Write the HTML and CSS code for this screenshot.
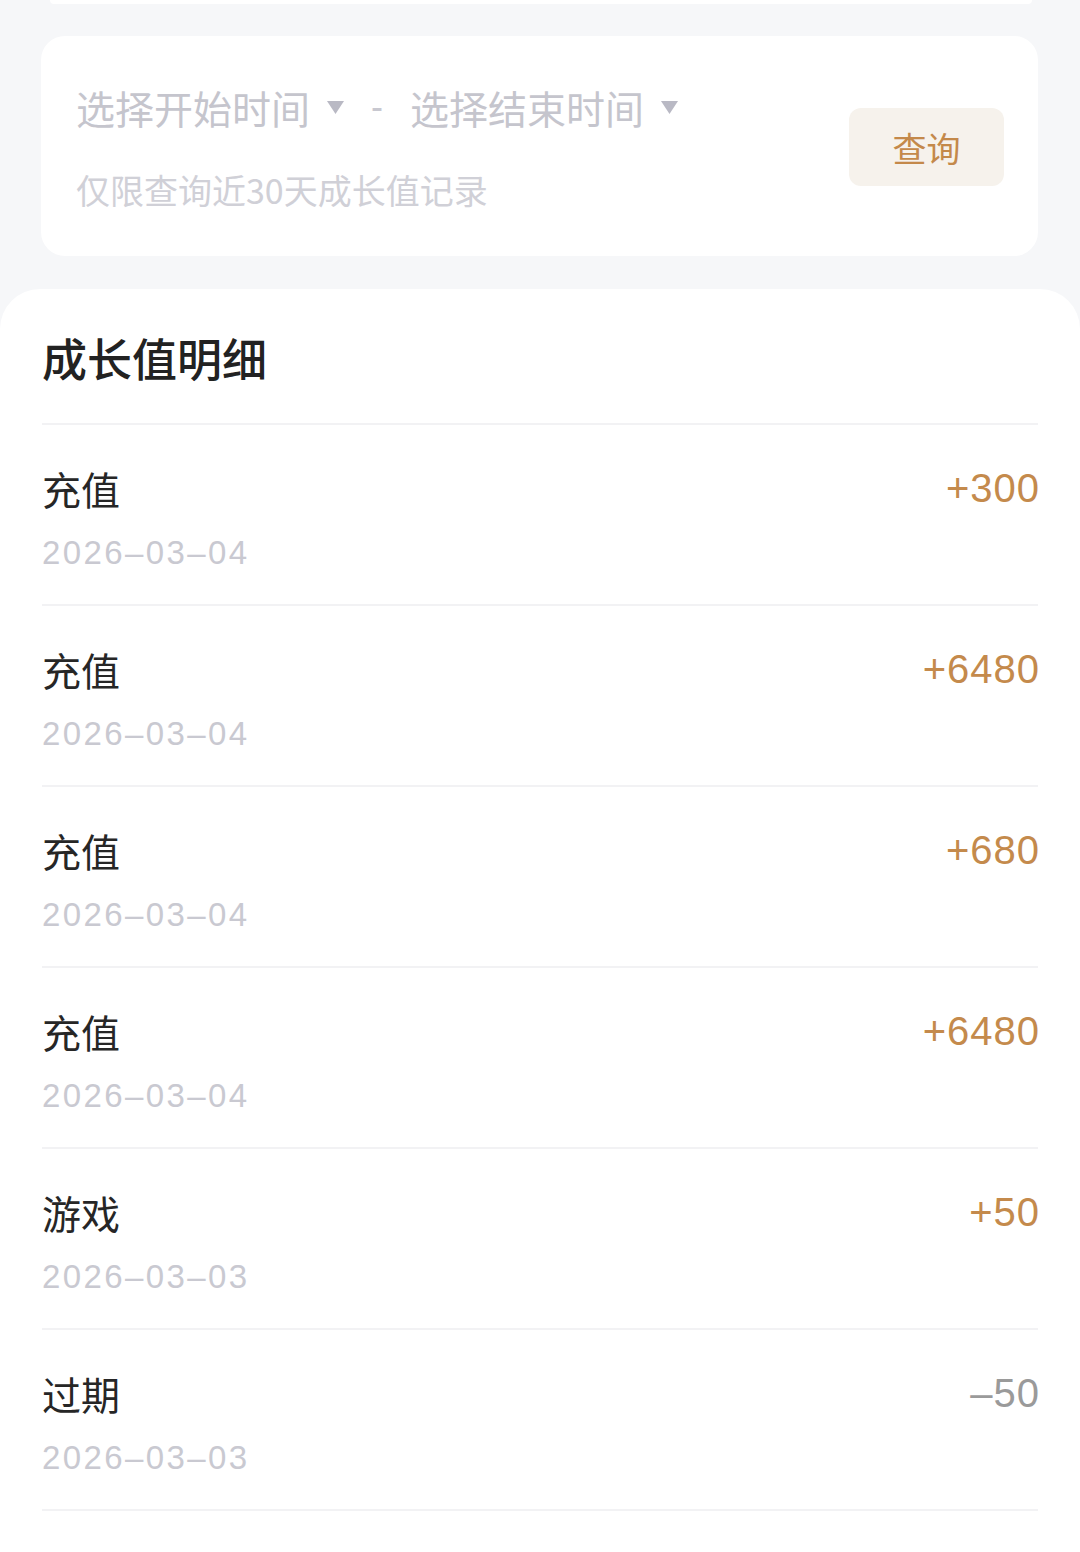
FILE: index.html
```html
<!DOCTYPE html>
<html lang="zh-CN">
<head>
    <meta charset="UTF-8">
    <meta name="viewport" content="width=device-width, initial-scale=1.0">
    <title>成长值明细</title>
    <link rel="stylesheet" href="styles.css">
</head>
<body>

<div class="page">
    <!-- bottom edge of the card above -->
    <div class="prev-card"></div>

    <!-- Date filter -->
    <div class="filter">
        <div class="filter-left">
            <div class="range">
                <span class="picker">选择开始时间
                    <svg class="arrow" width="19" height="15" viewBox="0 0 19 15"><path d="M1 1 H18 L9.5 14 Z" fill="#b9b9c4"/></svg>
                </span>
                <span class="dash">-</span>
                <span class="picker">选择结束时间
                    <svg class="arrow" width="19" height="15" viewBox="0 0 19 15"><path d="M1 1 H18 L9.5 14 Z" fill="#b9b9c4"/></svg>
                </span>
            </div>
            <p class="hint">仅限查询近30天成长值记录</p>
        </div>
        <button type="button" class="btn">查询</button>
    </div>

    <!-- Records -->
    <div class="records">
        <h2 class="records-title">成长值明细</h2>

        <div class="row">
            <div class="row-info">
                <div class="row-name">充值</div>
                <div class="row-date">2026–03–04</div>
            </div>
            <div class="row-value">+300</div>
        </div>
        <div class="row">
            <div class="row-info">
                <div class="row-name">充值</div>
                <div class="row-date">2026–03–04</div>
            </div>
            <div class="row-value">+6480</div>
        </div>
        <div class="row">
            <div class="row-info">
                <div class="row-name">充值</div>
                <div class="row-date">2026–03–04</div>
            </div>
            <div class="row-value">+680</div>
        </div>
        <div class="row">
            <div class="row-info">
                <div class="row-name">充值</div>
                <div class="row-date">2026–03–04</div>
            </div>
            <div class="row-value">+6480</div>
        </div>
        <div class="row">
            <div class="row-info">
                <div class="row-name">游戏</div>
                <div class="row-date">2026–03–03</div>
            </div>
            <div class="row-value">+50</div>
        </div>
        <div class="row">
            <div class="row-info">
                <div class="row-name">过期</div>
                <div class="row-date">2026–03–03</div>
            </div>
            <div class="row-value minus">–50</div>
        </div>
    </div>
</div>

</body>
</html>
```

FILE: styles.css
```css
body {
    margin: 0;
    background-color: #f6f7f9;
    font-family: "Liberation Sans", "Noto Sans CJK SC", sans-serif;
    color: #222;
}

.page {
    width: 1080px;
    height: 1552px;
    overflow: hidden;
}

.prev-card {
    height: 4px;
    margin: 0 48px 0 50px;
    background: #fff;
    border-radius: 0 0 4px 4px;
}

/* filter card */
.filter {
    margin: 32px 42px 0 41px;
    height: 220px;
    background: #fff;
    border-radius: 24px;
    padding: 0 34px 0 35px;
    display: flex;
    align-items: center;
    justify-content: space-between;
}

.range {
    display: flex;
    align-items: center;
    height: 56px;
}

.picker {
    display: flex;
    align-items: center;
    font-size: 39px;
    color: #c5c5cd;
    font-family: "Noto Sans CJK SC", sans-serif;
}

.arrow {
    margin-left: 16px;
}

.dash {
    font-size: 36px;
    color: #c8c8d0;
    margin: 0 27px 0 26px;
}

.hint {
    margin: 32px 0 0 0;
    font-size: 34px;
    line-height: 46px;
    color: #d0d0d7;
    font-family: "Noto Sans CJK SC", sans-serif;
}

.btn {
    width: 155px;
    height: 78px;
    margin-top: 2px;
    border: none;
    border-radius: 12px;
    background-color: #f6f2ec;
    color: #c4894a;
    font-size: 34px;
    font-family: "Noto Sans CJK SC", sans-serif;
    cursor: pointer;
}

/* record list */
.records {
    margin-top: 33px;
    background: #fff;
    border-radius: 40px 40px 0 0;
    padding: 0 42px 0 42px;
    min-height: 1300px;
}

.records-title {
    margin: 0;
    padding: 37px 0 33px 0;
    line-height: 64px;
    font-size: 45px;
    font-weight: 500;
    color: #222;
    font-family: "Noto Sans CJK SC", sans-serif;
    border-bottom: 2px solid #f2f2f4;
}

.row {
    display: flex;
    justify-content: space-between;
    align-items: flex-start;
    padding: 38px 0 32px 0;
    border-bottom: 2px solid #f2f2f4;
}

.row-name {
    font-size: 39px;
    line-height: 50px;
    color: #262626;
    font-family: "Noto Sans CJK SC", sans-serif;
}

.row-date {
    margin-top: 18px;
    margin-bottom: -3px;
    font-size: 33px;
    line-height: 44px;
    letter-spacing: 2.4px;
    color: #c9c9d1;
}

.row-value {
    font-size: 40px;
    line-height: 50px;
    letter-spacing: 1px;
    color: #c48a4c;
    margin-right: -2px;
}

.row-value.minus {
    color: #9a9a9a;
}
```
